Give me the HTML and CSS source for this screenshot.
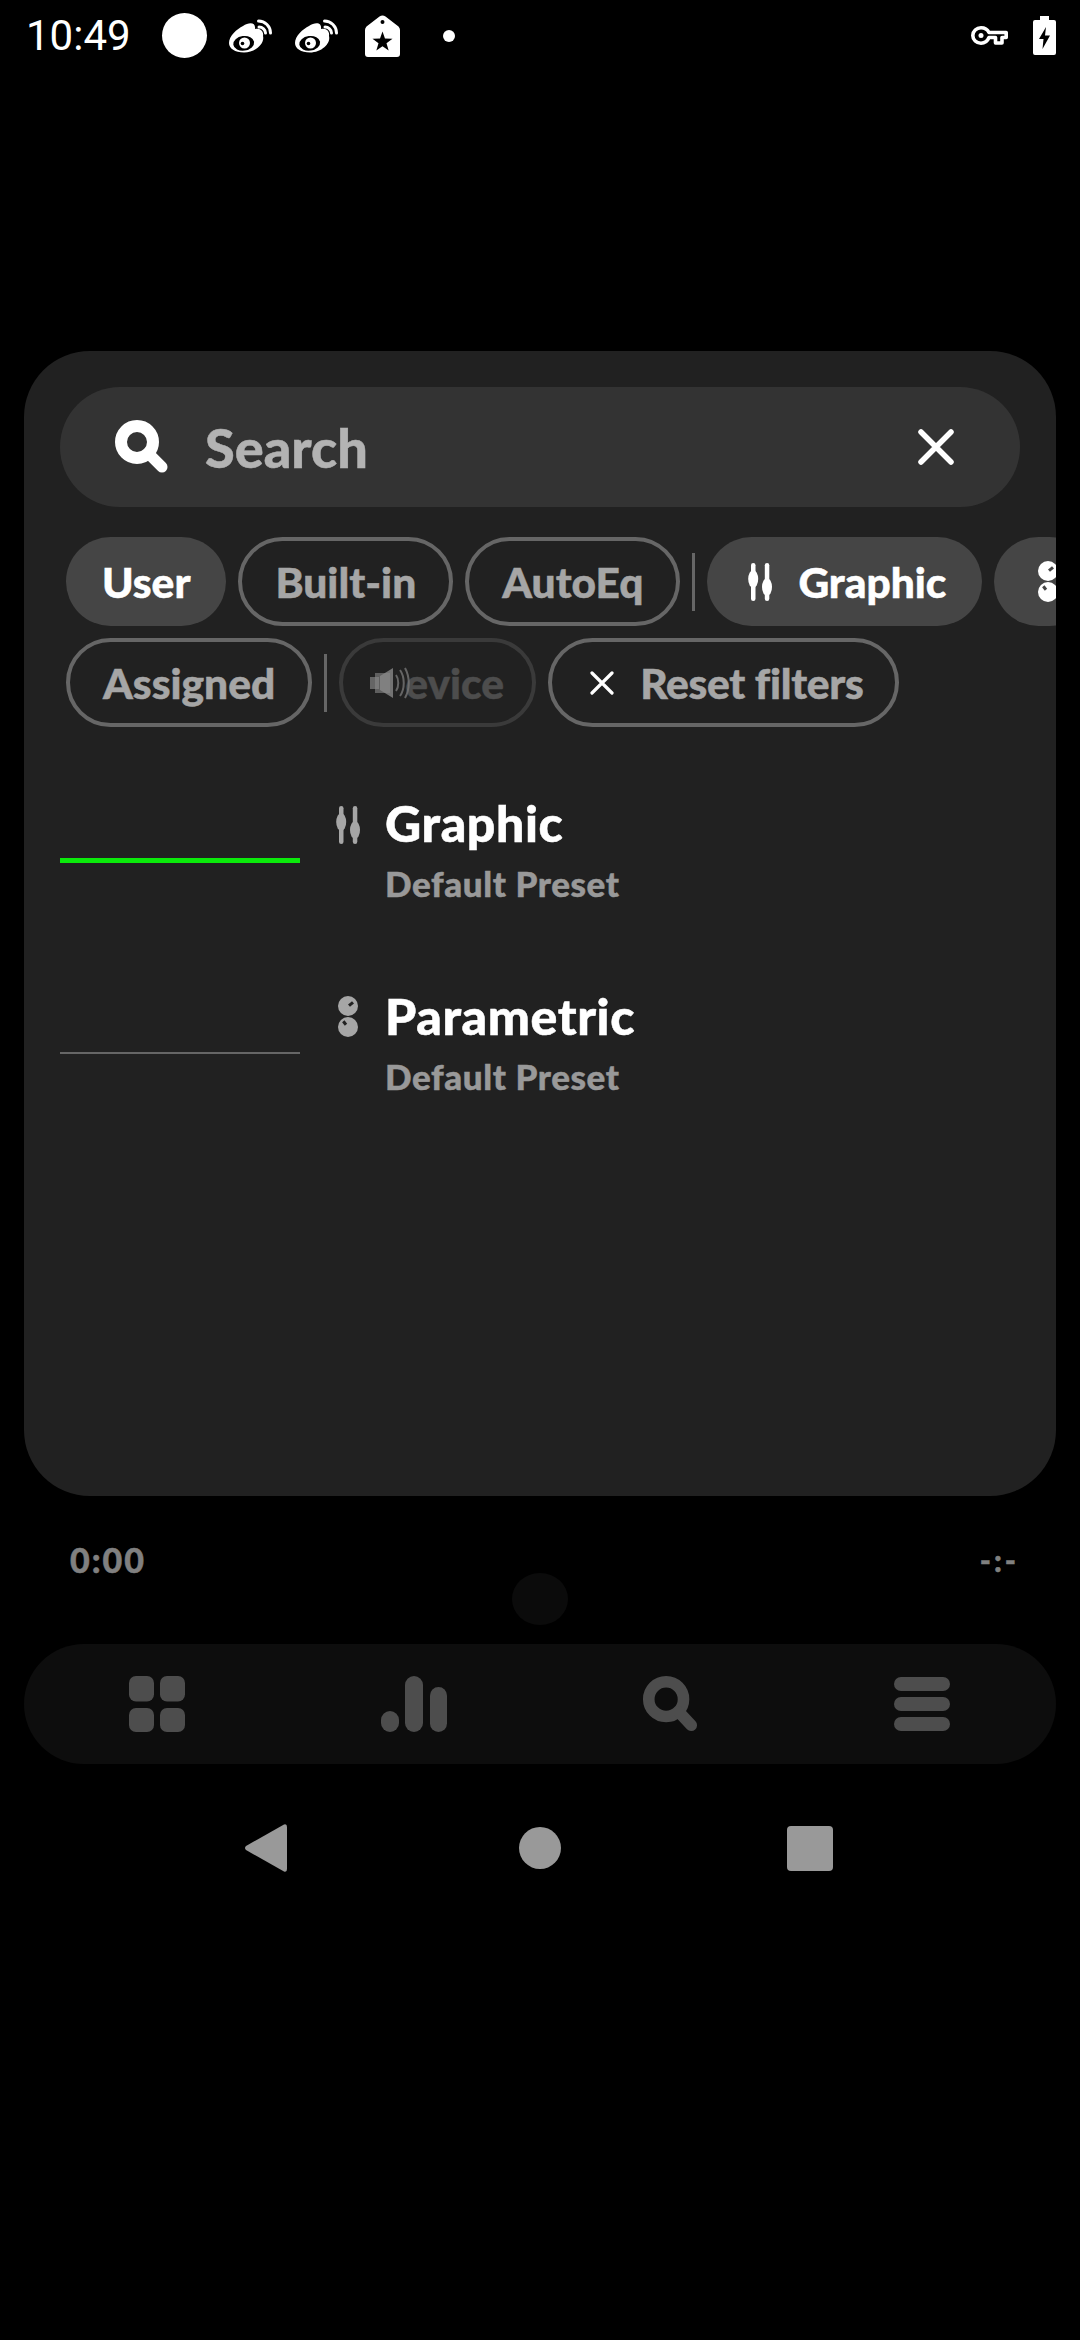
FILE: index.html

```html
<!DOCTYPE html>
<html lang="en">
<head>
  <meta charset="UTF-8" />
  <meta name="viewport" content="width=device-width, initial-scale=1.0" />
  <title>Presets</title>
  <link rel="stylesheet" href="styles.css">
</head>
<body>
  <div class="status-bar">
    <span class="clock">10:49</span>
    <span class="status-circle"></span>
    <svg class="weibo" viewBox="0 0 43 34"><path fill="#fff" d="M14 7C20 3 27 3 26 10C31 8.500 35 12 34 17C36 25 26 33.500 15 33.500C6 33.500 0 29.500 0 24C0 17 8 10 14 7Z"/><ellipse cx="14.700" cy="24.300" rx="10.500" ry="7.300" transform="rotate(-8 14.700 24.300)" fill="#000"/><circle cx="15.500" cy="24" r="5.500" fill="#fff"/><circle cx="13.500" cy="24.500" r="1.800" fill="#000"/><path fill="none" stroke="#fff" stroke-width="3" stroke-linecap="round" d="M30 8C33.500 8 36.500 11 36.500 14M29.500 2C36 2 41.500 7.500 41.500 14"/></svg>
    <svg class="weibo" viewBox="0 0 43 34"><path fill="#fff" d="M14 7C20 3 27 3 26 10C31 8.500 35 12 34 17C36 25 26 33.500 15 33.500C6 33.500 0 29.500 0 24C0 17 8 10 14 7Z"/><ellipse cx="14.700" cy="24.300" rx="10.500" ry="7.300" transform="rotate(-8 14.700 24.300)" fill="#000"/><circle cx="15.500" cy="24" r="5.500" fill="#fff"/><circle cx="13.500" cy="24.500" r="1.800" fill="#000"/><path fill="none" stroke="#fff" stroke-width="3" stroke-linecap="round" d="M30 8C33.500 8 36.500 11 36.500 14M29.500 2C36 2 41.500 7.500 41.500 14"/></svg>
    <svg class="tag" viewBox="0 0 35 42"><path fill="#fff" fill-rule="evenodd" d="M14.500 1.500Q17.500 -0.500 20.500 1.500L33.500 11.500Q35 13 35 15V39Q35 42 32 42H3Q0 42 0 39V15Q0 13 1.500 11.500ZM17.500 5A2 2 0 1 0 17.500 9A2 2 0 1 0 17.500 5ZM17.500 16.500L19.970 23.600L27.500 23.760L21.490 28.300L23.670 35.490L17.500 31.200L11.330 35.490L13.500 28.300L7.500 23.760L15.030 23.600Z"/></svg>
    <span class="status-dot"></span>
    <svg class="key" viewBox="0 0 37 19"><path fill="none" stroke="#fff" stroke-width="3.600" stroke-linejoin="round" d="M18 6.500H35.200V11.500H31V17H24.500V11.500H18C16.500 15 13.500 17.200 10 17.200C5.500 17.200 1.800 13.800 1.800 9.500C1.800 5.200 5.500 1.800 10 1.800C13.500 1.800 16.500 3.500 18 6.500Z"/><circle cx="10" cy="9.500" r="2.500" fill="#fff"/></svg>
    <svg class="battery" viewBox="0 0 23 39"><path fill="#fff" fill-rule="evenodd" d="M7 0H16V4H21Q23 4 23 6V37Q23 39 21 39H2Q0 39 0 37V6Q0 4 2 4H7ZM13 11L6 23H10.500L9.500 33L17 19.500H12Z"/></svg>
  </div>

  <div class="card">
    <div class="search">
      <svg class="search-icon" viewBox="0 0 54 54"><circle cx="22" cy="22" r="16" fill="none" stroke="#fff" stroke-width="12"/><path d="M33 33L47 47" stroke="#fff" stroke-width="11" stroke-linecap="round"/></svg>
      <span class="search-label">Search</span>
      <svg class="search-clear" viewBox="0 0 36 36"><path d="M3 3L33 33M33 3L3 33" stroke="#fff" stroke-width="5.500" stroke-linecap="round"/></svg>
    </div>

    <div class="chips">
      <span class="chip on">User</span>
      <span class="chip">Built-in</span>
      <span class="chip">AutoEq</span>
      <span class="chip-divider"></span>
      <span class="chip on with-icon">
        <svg class="sliders-icon" viewBox="0 0 24 38" fill="#fff"><rect x="3" width="4.500" height="38" rx="2.250"/><ellipse cx="5.200" cy="16" rx="5" ry="9"/><rect x="16.800" width="4.500" height="38" rx="2.250"/><ellipse cx="19" cy="24" rx="5" ry="9"/></svg>
        Graphic
      </span>
      <span class="chip on with-icon knobs-chip">
        <svg class="knobs-icon" viewBox="0 0 20 41"><circle cx="10" cy="10" r="10" fill="#fff"/><path d="M11 9.700L15 6.300" stroke="#454545" stroke-width="3"/><circle cx="10" cy="31" r="10" fill="#fff"/><path d="M5.300 25.300L8 28.700" stroke="#454545" stroke-width="3"/></svg>
      </span>
    </div>

    <div class="chips second">
      <span class="chip">Assigned</span>
      <span class="chip-divider"></span>
      <span class="chip disabled">
        <svg class="speaker-icon" viewBox="0 0 40 32"><path fill="#777" d="M0 10H9V22H0Z" opacity=".8"/><path fill="#888" d="M5 6H20V26H5Z" opacity=".6"/><path fill="#888" d="M10 9L23 1V31L10 23Z" opacity=".8"/><path fill="none" stroke="#777" stroke-width="2" d="M26 8C29 12 29 20 26 24M30 3C35 10 35 22 30 29M35 1C40 10 40 22 35 31" opacity=".8"/></svg>
        <span class="device-label">evice</span>
      </span>
      <span class="chip with-icon reset">
        <svg class="reset-icon" viewBox="0 0 24 24"><path d="M2 2L22 22M22 2L2 22" stroke="#fff" stroke-width="3.200" stroke-linecap="round"/></svg>
        Reset filters
      </span>
    </div>

    <div class="preset">
      <div class="curve"><div class="curve-line active"></div></div>
      <svg class="preset-icon sliders" viewBox="0 0 24 38" fill="#a6a6a6"><rect x="3" width="4.500" height="38" rx="2.250"/><ellipse cx="5.200" cy="16" rx="5" ry="9"/><rect x="16.800" width="4.500" height="38" rx="2.250"/><ellipse cx="19" cy="24" rx="5" ry="9"/></svg>
      <div class="preset-text">
        <div class="preset-name">Graphic</div>
        <div class="preset-sub">Default Preset</div>
      </div>
    </div>
    <div class="preset">
      <div class="curve"><div class="curve-line"></div></div>
      <svg class="preset-icon knobs" viewBox="0 0 20 41"><circle cx="10" cy="10" r="10" fill="#a6a6a6"/><path d="M11 9.700L15 6.300" stroke="#212121" stroke-width="3"/><circle cx="10" cy="31" r="10" fill="#a6a6a6"/><path d="M5.300 25.300L8 28.700" stroke="#212121" stroke-width="3"/></svg>
      <div class="preset-text">
        <div class="preset-name">Parametric</div>
        <div class="preset-sub">Default Preset</div>
      </div>
    </div>
  </div>

  <div class="seek-row">
    <span class="seek-time">0:00</span>
    <span class="seek-thumb"></span>
    <span class="seek-time end">-:-</span>
  </div>

  <div class="bottom-nav">
    <svg class="nav-icon" viewBox="0 0 56 56"><rect x="0" y="0" width="25" height="25.500" rx="7"/><rect x="31" y="0" width="25" height="25.500" rx="7"/><rect x="0" y="32" width="25" height="24" rx="7"/><rect x="31" y="32" width="25" height="24" rx="7"/></svg>
    <svg class="nav-icon bars" viewBox="0 0 66 56"><rect x="0" y="35" width="18" height="21" rx="9"/><rect x="24" y="0" width="18" height="56" rx="9"/><rect x="49" y="11" width="17" height="45" rx="8.500"/></svg>
    <svg class="nav-icon" viewBox="0 0 56 58"><circle cx="24" cy="24" r="18" fill="none" stroke="#4d4d4d" stroke-width="12"/><path d="M37 37L50 51" stroke="#4d4d4d" stroke-width="12" stroke-linecap="round"/></svg>
    <svg class="nav-icon" viewBox="0 0 56 54"><rect x="0" y="0" width="56" height="14" rx="7"/><rect x="0" y="20" width="56" height="14" rx="7"/><rect x="0" y="40" width="56" height="14" rx="7"/></svg>
  </div>

  <div class="system-nav">
    <svg class="back" viewBox="0 0 42 48"><path fill="#999" d="M39 0.500Q42 -0.500 42 3V45Q42 48.500 39 47.500L1 26Q-1 24 1 22Z"/></svg>
    <span class="home"></span>
    <span class="recent"></span>
  </div>
</body>
</html>
```

FILE: styles.css

```css
* {
  box-sizing: border-box;
}
body {
  margin: 0;
  background-color: #000;
  font-family: Lato, "Open Sans", sans-serif;
  font-weight: 900;
  -webkit-text-stroke: 0.5px;
  overflow: hidden;
}
.status-bar {
  display: flex;
  align-items: center;
  height: 71px;
  padding: 0 24px 0 26px;
}
.clock {
  font-family: Roboto, sans-serif;
  font-weight: 400;
  font-size: 42px;
  -webkit-text-stroke: 0;
  color: #fff;
  width: 136px;
}
.status-circle {
  width: 45px;
  height: 45px;
  border-radius: 50%;
  background-color: #fff;
  margin-right: 22px;
}
.weibo {
  width: 43px;
  height: 34px;
  margin-right: 23px;
}
.tag {
  width: 35px;
  height: 42px;
  margin-left: 4px;
  margin-right: 43px;
}
.status-dot {
  width: 12px;
  height: 12px;
  border-radius: 50%;
  background-color: #fff;
}
.key {
  width: 37px;
  height: 19px;
  margin-left: auto;
  margin-right: 25px;
}
.battery {
  width: 23px;
  height: 39px;
}
.card {
  margin: 280px 24px 0;
  height: 1145px;
  border-radius: 66px;
  background-color: #212121;
  padding-top: 36px;
  overflow: hidden;
}
.search {
  display: flex;
  align-items: center;
  height: 120px;
  margin: 0 36px;
  padding: 0 66px 0 55px;
  border-radius: 60px;
  background-color: #333;
}
.search-icon {
  width: 54px;
  height: 54px;
  margin-right: 36px;
}
.search-label {
  font-size: 54px;
  color: #b3b3b3;
}
.search-clear {
  width: 36px;
  height: 36px;
  margin-left: auto;
}
.chips {
  display: flex;
  align-items: center;
  gap: 12px;
  margin-top: 30px;
  padding-left: 42px;
  white-space: nowrap;
}
.chips.second {
  margin-top: 12px;
}
.chip {
  display: flex;
  flex: none;
  align-items: center;
  height: 89px;
  padding: 0 33px;
  border: 4px solid #666;
  border-radius: 45px;
  font-size: 42.500px;
  color: #a6a6a6;
}
.chip.on {
  border: none;
  padding: 0 36px;
  background-color: #454545;
  color: #fff;
}
.chip.with-icon {
  gap: 26px;
  padding-left: 41px;
}
.chip.reset {
  padding: 0 32px 0 38px;
  letter-spacing: -0.300px;
}
.chip.knobs-chip {
  padding-left: 44px;
}
.chip-divider {
  flex: none;
  width: 3px;
  height: 58px;
  background-color: #666;
}
.chip.disabled {
  position: relative;
  width: 197px;
  padding-left: 62px;
  border-color: #3a3a3a;
  color: #4d4d4d;
}
.speaker-icon {
  position: absolute;
  left: 27px;
  top: 25px;
  width: 40px;
  height: 32px;
}
.sliders-icon {
  width: 24px;
  height: 38px;
}
.knobs-icon {
  width: 20px;
  height: 41px;
}
.reset-icon {
  width: 24px;
  height: 24px;
}
.preset {
  display: flex;
  align-items: flex-start;
  height: 193px;
}
.chips.second + .preset {
  margin-top: 62px;
}
.curve {
  display: flex;
  align-items: center;
  flex: none;
  width: 240px;
  height: 142px;
  margin-left: 36px;
}
.curve-line {
  width: 100%;
  height: 2px;
  background-color: #666;
}
.curve-line.active {
  height: 5px;
  background-color: #0bea0b;
}
.preset-icon {
  flex: none;
}
.preset-icon.sliders {
  width: 24px;
  height: 38px;
  margin: 17px 25px 0 36px;
}
.preset-icon.knobs {
  width: 20px;
  height: 41px;
  margin: 14px 27px 0 38px;
}
.preset-text {
  padding-top: 7px;
}
.preset-name {
  font-size: 50px;
  line-height: 54px;
  letter-spacing: 0.600px;
  color: #fff;
}
.preset-sub {
  margin-top: 13px;
  font-size: 35px;
  line-height: 40px;
  letter-spacing: 0.600px;
  color: #999;
}
.seek-row {
  display: grid;
  grid-template-columns: 1fr auto 1fr;
  height: 148px;
  padding: 46px 61px 0;
}
.seek-time {
  margin-left: 9px;
  font-size: 34px;
  line-height: 36px;
  letter-spacing: 2px;
  color: #808080;
}
.seek-time.end {
  text-align: right;
  font-size: 30px;
  letter-spacing: 3px;
}
.seek-thumb {
  width: 56px;
  height: 52px;
  margin-top: 31px;
  border-radius: 50%;
  background-color: #0b0b0b;
}
.bottom-nav {
  display: flex;
  align-items: center;
  justify-content: space-between;
  height: 120px;
  margin: 0 24px;
  padding: 0 106px 0 105px;
  border-radius: 60px;
  background-color: #0d0d0d;
}
.nav-icon {
  width: 56px;
  height: 56px;
  fill: #4d4d4d;
}
.nav-icon.bars {
  width: 66px;
}
.system-nav {
  display: flex;
  align-items: center;
  justify-content: space-between;
  height: 48px;
  margin-top: 60px;
  padding: 0 247px 0 245px;
}
.back {
  width: 42px;
  height: 48px;
}
.home {
  width: 42px;
  height: 42px;
  margin-left: 6px;
  border-radius: 50%;
  background-color: #999;
}
.recent {
  width: 46px;
  height: 45px;
  border-radius: 4px;
  background-color: #999;
}
```
